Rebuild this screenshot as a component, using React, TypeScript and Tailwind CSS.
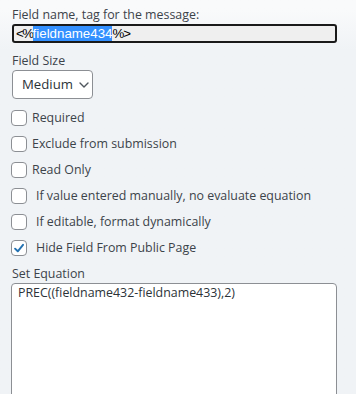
const font = { fontFamily: '"Open Sans", "Noto Sans", sans-serif' };

function Check({ label, checked = false, wide = false }: { label: string; checked?: boolean; wide?: boolean }) {
  return (
    <div className="flex h-[26px] items-center">
      <span className="ml-[11px] flex h-[16px] w-[16px] items-center justify-center rounded-[4px] border border-[#8c8f94] bg-white">
        {checked && (
          <svg viewBox="0 0 16 16" className="h-[15px] w-[15px]">
            <path d="M3.5 8.2 L6.6 11.2 L12.6 3.8" fill="none" stroke="#2271b1" strokeWidth="2.2" strokeLinecap="round" strokeLinejoin="round" />
          </svg>
        )}
      </span>
      <span className={`${wide ? 'ml-[9px]' : 'ml-[5px]'} text-[12.4px] leading-none text-[#3c434a]`}>{label}</span>
    </div>
  );
}

export default function App() {
  return (
    <div
      className="h-[394px] w-[356px] overflow-hidden bg-gradient-to-b from-[#f9fafb] from-[10px] to-[#f0f3f6] to-[50px]"
      style={font}
    >
      <div className="pt-[7px]">
        <div className="pl-[12px] text-[12.4px] leading-[16px] text-[#3c434a]">Field name, tag for the message:</div>
        <div className="ml-[12px] mt-[1px] flex h-[19px] w-[325px] items-center rounded-[3px] border-2 border-[#1a1a1a] bg-[#efefef] pl-[2px]">
          <span className="text-[13.3px] leading-[15px] text-black" style={{ fontFamily: '"Liberation Sans", Arial, sans-serif' }}>
            <span className="tracking-[-1.5px]">&lt;%</span>
            <span className="bg-[#3390ff] text-white">fieldname434</span>
            <span className="tracking-[-1px]">%&gt;</span>
          </span>
        </div>

        <div className="mt-[10px] pl-[12px] text-[12.4px] leading-[16px] text-[#3c434a]">Field Size</div>
        <div className="ml-[12px] mt-[1px] flex h-[29px] w-[81px] items-center rounded-[4px] border border-[#8c8f94] bg-white pl-[9px]">
          <span className="text-[13.2px] leading-none text-[#2c3338]">Medium</span>
          <svg viewBox="0 0 10 6" className="ml-[6px] h-[6px] w-[10px]">
            <path d="M1 1 L5 5 L9 1" fill="none" stroke="#50575e" strokeWidth="1.4" strokeLinecap="round" strokeLinejoin="round" />
          </svg>
        </div>

        <div className="mt-[6px]">
          <Check label="Required" />
          <Check label="Exclude from submission" />
          <Check label="Read Only" />
          <Check label="If value entered manually, no evaluate equation" wide />
          <Check label="If editable, format dynamically" wide />
          <Check label="Hide Field From Public Page" checked wide />
        </div>

        <div className="mt-[5px] pl-[12px] text-[12.4px] leading-[16px] text-[#3c434a]">Set Equation</div>
        <div className="ml-[11px] mt-[1px] h-[140px] w-[326px] rounded-[4px] border border-[#8c8f94] bg-white px-[6px] pt-0 text-[12.4px] leading-[17px] text-[#2c3338]">
          PREC((fieldname432-fieldname433),2)
        </div>
      </div>
    </div>
  );
}
